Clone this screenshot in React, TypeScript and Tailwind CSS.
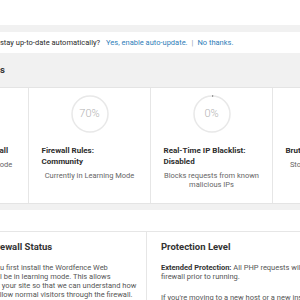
import React from "react";

function Cut({ pre, text, className = "" }: { pre: string; text: React.ReactNode; className?: string }) {
  return (
    <div className={"flex whitespace-pre " + className}>
      <span className="flex w-0 shrink-0 justify-end">{pre}</span>
      <span>{text}</span>
    </div>
  );
}

function Ring({ label, tick }: { label: string; tick?: boolean }) {
  return (
    <div className="relative flex h-[38px] w-[38px] items-center justify-center">
      <svg width="38" height="38" viewBox="0 0 38 38" className="absolute inset-0">
        <circle cx="19" cy="19" r="18" fill="none" stroke="#e8e8e8" strokeWidth="1.5" />
        {tick && <path d="M19 1 A18 18 0 0 1 20.2 1.05" fill="none" stroke="#9a9a9a" strokeWidth="2" />}
      </svg>
      <span className="relative text-[11px] font-light text-[#b3b3b3]">{label}</span>
    </div>
  );
}

function Card({
  label,
  title,
  sub,
  tick,
  nowrap,
}: {
  label: string;
  title: React.ReactNode;
  sub: string;
  tick?: boolean;
  nowrap?: boolean;
}) {
  return (
    <div className="flex w-[122px] shrink-0 flex-col items-center border-l border-[#e6e6e6] pt-[7px]">
      <Ring label={label} tick={tick} />
      <div className="mt-[12px] w-[96px]">
        <div className={"text-[8px] font-bold leading-[11px] text-[#2d2d2d] " + (nowrap ? "whitespace-nowrap" : "")}>
          {title}
        </div>
        <div className="mt-[4px] text-center text-[7.5px] leading-[9px] text-[#666]">{sub}</div>
      </div>
    </div>
  );
}

export default function App() {
  return (
    <div className="h-[300px] w-[300px] overflow-hidden bg-[#f1f1f1] font-['Roboto',sans-serif]">
      <div className="h-[25px] bg-white" />
      <div className="h-[7px]" />
      <div className="flex h-[21px] items-center bg-white text-[7.5px] text-[#2a2a2a]">
        <Cut pre="Do you want Wordfence to " text="stay up-to-date automatically?" />
        <span className="ml-[6px] whitespace-nowrap text-[#2f80b9]">Yes, enable auto-update.</span>
        <span className="mx-[4px] text-[#8a9fb0]">|</span>
        <span className="whitespace-nowrap text-[#2f80b9]">No thanks.</span>
      </div>
      <div className="flex h-[34px] items-center text-[9.5px] font-bold text-[#333]">
        <Cut pre="Firewall Option" text="s" />
      </div>
      <div className="ml-[-94px] flex h-[117px] border-y border-[#e4e4e4] bg-white">
        <Card label="100%" title="Web Application Firewall" sub="Currently in Learning Mode" nowrap />
        <Card label="70%" title={<>Firewall Rules:<br />Community</>} sub="Currently in Learning Mode" />
        <Card label="0%" tick title={<>Real-Time IP Blacklist:<br />Disabled</>} sub="Blocks requests from known malicious IPs" />
        <Card label="100%" title="Brute Force Protection" sub="Stops Password Guessing Attacks" />
      </div>
      <div className="h-[6px]" />
      <div className="bg-white">
        <div className="h-[22px] border-b border-[#e6e6e6]" />
        <div className="flex">
          <div className="w-[147px] shrink-0 border-r border-[#e6e6e6] pt-[9px]">
            <Cut pre="Web Application Fir" text="ewall Status" className="text-[9.5px] font-bold leading-[12px] text-[#333]" />
            <div className="mt-[9.5px] text-[7.5px] leading-[9px] text-[#555]">
              <Cut pre="When yo" text="u first install the Wordfence Web" />
              <Cut pre="Application Firewall, it wil" text="l be in learning mode. This allows" />
              <Cut pre="Wordfence to learn about" text=" your site so that we can understand how" />
              <Cut pre="to protect it and how to al" text="low normal visitors through the firewall." className="pl-[1.5px]" />
              <Cut pre="We recommend you let Wordfen" text="ce learn for a week before you enable" />
            </div>
          </div>
          <div className="flex-1 whitespace-nowrap pl-[14px] pt-[9px]">
            <div className="text-[9.5px] font-bold leading-[12px] text-[#333]">Protection Level</div>
            <div className="mt-[9.5px] text-[7.5px] leading-[9.5px] text-[#555]">
              <div>
                <span className="font-bold text-[#333]">Extended Protection:</span> All PHP requests will be processed by the
              </div>
              <div>firewall prior to running.</div>
              <div className="mt-[11px]">If you're moving to a new host or a new installation location, you may need to</div>
            </div>
          </div>
        </div>
      </div>
    </div>
  );
}
